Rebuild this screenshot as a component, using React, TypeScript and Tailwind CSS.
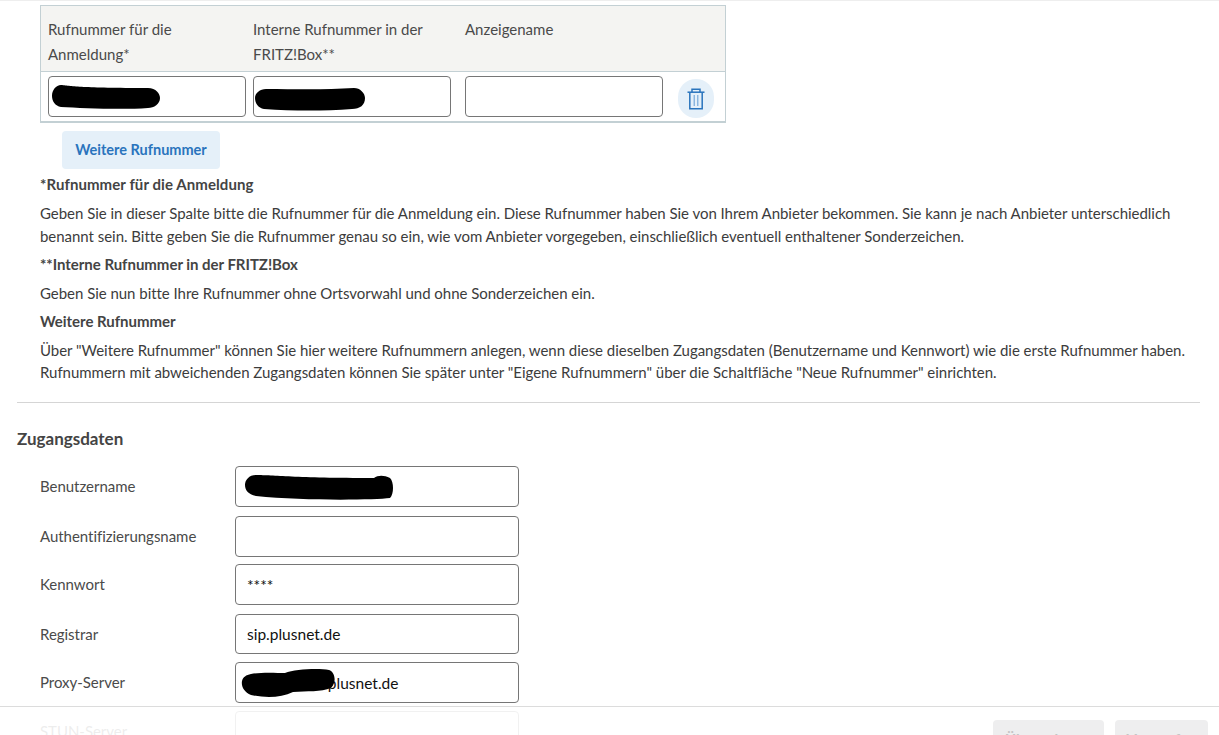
const font = { fontFamily: '"Lato", "Noto Sans", sans-serif' };

function Blob({ d, className }: { d: string; className: string }) {
  return (
    <svg className={`absolute pointer-events-none ${className}`} width="170" height="40" viewBox="0 0 170 40" fill="none">
      <path d={d} fill="#000" />
    </svg>
  );
}

function Field({ value, className, children }: { value?: string; className: string; children?: React.ReactNode }) {
  return (
    <div className={`relative ${className}`}>
      <input
        readOnly
        value={value ?? ""}
        className="w-full h-full rounded-[4px] border border-[#767676] bg-white px-[11px] text-[15.5px] text-[#111] outline-none"
      />
      {children}
    </div>
  );
}

function Row({ label, value, className, fieldClass, children }: { label: string; value?: string; className: string; fieldClass?: string; children?: React.ReactNode }) {
  return (
    <div className={`flex items-center pl-[40px] ${className}`}>
      <span className="w-[195px] text-[15px] tracking-[-0.03px] text-[#4a4a4a]">{label}</span>
      <Field value={value} className={`w-[284px] ${fieldClass ?? "h-[41px]"}`}>{children}</Field>
    </div>
  );
}

export default function App() {
  return (
    <div style={font} className="relative h-[735px] w-full overflow-hidden bg-white text-[15px] leading-[23px] text-[#3c3c3c]">
      <div className="h-px bg-[#eeeeee]" />
      <div className="ml-[40px] mt-[4px] w-[686px] border border-b-2 border-[#c3d0d4]">
        <div className="grid h-[66px] grid-cols-[205px_212px_212px_1fr] border-b border-[#c3d0d4] bg-[#f4f4f2] pt-[11px] leading-[25px] text-[#4a4a4a]">
          <div className="pl-[7px] pr-[40px]">Rufnummer für die Anmeldung*</div>
          <div className="pl-[7px] pr-[14px]">Interne Rufnummer in der FRITZ!Box**</div>
          <div className="pl-[7px]">Anzeigename</div>
          <div />
        </div>
        <div className="grid h-[49px] grid-cols-[205px_212px_212px_1fr] pt-[4px]">
          <div className="pl-[7px]">
            <Field className="h-[41px] w-[198px]">
              <Blob className="left-[3px] top-[8px]" d="M10 1C22 2 30 4 97 4C105 4 109 10 109 14C109 20 103 24 97 24C70 26 30 24 10 23C4 22 1 17 1 12C1 6 5 1 10 1Z" />
            </Field>
          </div>
          <div className="pl-[7px]">
            <Field className="h-[41px] w-[198px]">
              <Blob className="left-[1px] top-[11px]" d="M12 2C40 2 70 3 100 1C106 1 111 6 111 11C111 18 106 22 98 22C70 24 40 24 10 22C4 21 1 16 1 11C1 6 6 2 12 2Z" />
            </Field>
          </div>
          <div className="pl-[7px]">
            <Field className="h-[41px] w-[198px]" />
          </div>
          <div className="pl-[8px] pt-[3px]">
            <button className="flex h-[39px] w-[36px] items-center justify-center rounded-full bg-[#e5f0f9]">
              <svg width="18" height="22" viewBox="0 0 18 22" fill="none" stroke="#2a74bd" strokeWidth="1.5">
                <path d="M0.5 4.2H17.5" />
                <path d="M5 4V1.2H13V4" />
                <path d="M2.8 4.2V20.8H15.2V4.2" />
                <path d="M7.2 7V18M10.8 7V18" strokeWidth="1.1" stroke="#6ea3d6" />
              </svg>
            </button>
          </div>
        </div>
      </div>
      <button className="ml-[62px] mt-[8px] block h-[38px] w-[158px] rounded-[4px] bg-[#e5f0f9] pb-[2px] text-[14.5px] font-bold text-[#2a74bd]">
        Weitere Rufnummer
      </button>
      <div className="mt-[4px] pl-[40px] pr-[20px] tracking-[-0.03px]">
        <p className="font-bold tracking-[0.08px] text-[#444]">*Rufnummer für die Anmeldung</p>
        <p className="mt-[6px]">
          Geben Sie in dieser Spalte bitte die Rufnummer für die Anmeldung ein. Diese Rufnummer haben Sie von Ihrem Anbieter bekommen. Sie kann je nach Anbieter unterschiedlich benannt sein. Bitte geben Sie die Rufnummer genau so ein, wie vom Anbieter vorgegeben, einschließlich eventuell enthaltener Sonderzeichen.
        </p>
        <p className="mt-[5px] font-bold text-[#444]">**Interne Rufnummer in der FRITZ!Box</p>
        <p className="mt-[6px]">Geben Sie nun bitte Ihre Rufnummer ohne Ortsvorwahl und ohne Sonderzeichen ein.</p>
        <p className="mt-[5px] font-bold text-[#444]">Weitere Rufnummer</p>
        <p className="mt-[6px] leading-[22px]">
          Über "Weitere Rufnummer" können Sie hier weitere Rufnummern anlegen, wenn diese dieselben Zugangsdaten (Benutzername und Kennwort) wie die erste Rufnummer haben. Rufnummern mit abweichenden Zugangsdaten können Sie später unter "Eigene Rufnummern" über die Schaltfläche "Neue Rufnummer" einrichten.
        </p>
      </div>
      <div className="ml-[17px] mt-[19px] w-[1183px] border-t border-[#d5d5d5]" />
      <h2 className="ml-[17px] mt-[24px] text-[17px] font-bold text-[#444]">Zugangsdaten</h2>
      <Row label="Benutzername" className="mt-[16px]">
        <Blob className="left-[9px] top-[8px]" d="M12 1C30 1 50 4 130 4C134 1 140 1 146 4C150 8 150 20 146 24C130 26 60 27 12 22C4 20 1 16 1 11C1 6 5 1 12 1Z" />
      </Row>
      <Row label="Authentifizierungsname" className="mt-[9px]" />
      <Row label="Kennwort" value="****" className="mt-[7px]" />
      <Row label="Registrar" value="sip.plusnet.de" className="mt-[9px]" fieldClass="h-[40px]" />
      <Row label="Proxy-Server" value="xxxxxxxxxx.plusnet.de" className="mt-[8px]">
        <Blob className="left-[6px] top-[6px]" d="M10 6C20 4 36 5 44 5C54 1 78 0 88 2C94 4 96 14 90 20C80 24 66 23 52 24C40 30 24 30 10 27C3 24 0 18 1 13C2 9 5 7 10 6Z" />
      </Row>
      <Row label="STUN-Server" className="mt-[8px]" />
      <div className="absolute bottom-0 left-0 right-0 flex h-[29px] justify-end gap-[11px] border-t border-[#dcdcdc] bg-white/90 pr-[11px] pt-[13px]">
        <button className="h-[38px] w-[111px] shrink-0 rounded-[4px] bg-[#eeeeef] text-[15px] font-bold text-[#c4c4c4]">Übernehmen</button>
        <button className="h-[38px] w-[93px] shrink-0 rounded-[4px] bg-[#eeeeef] text-[15px] font-bold text-[#c4c4c4]">Verwerfen</button>
      </div>
    </div>
  );
}
